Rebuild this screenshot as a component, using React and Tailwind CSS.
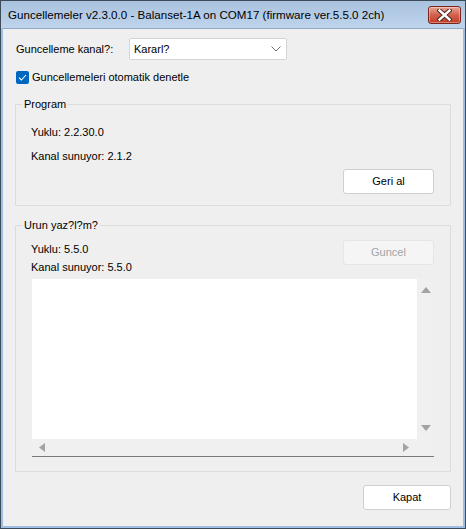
import React from 'react';

const font = { fontFamily: '"Liberation Sans", Arial, sans-serif' };

const CloseButton = () => (
  <div className="mt-[5px] mr-[4px] flex h-[18px] w-[33px] items-center justify-center rounded-[3px] border border-[#7a2318] bg-gradient-to-b from-[#e6a495] via-[#d2604c] to-[#c23b25] shadow-[inset_0_0_0_1px_rgba(255,255,255,0.35)]">
    <svg width="15" height="12" viewBox="0 0 15 12">
      <path d="M2.5 1.5 L12.5 10.5 M12.5 1.5 L2.5 10.5" stroke="#4a2a24" strokeWidth="4.4" strokeLinecap="square" />
      <path d="M2.5 1.5 L12.5 10.5 M12.5 1.5 L2.5 10.5" stroke="#ffffff" strokeWidth="2.4" strokeLinecap="square" />
    </svg>
  </div>
);

const Button = ({ children, disabled }) => (
  <div
    className={
      disabled
        ? 'flex h-[25px] w-[91px] items-center justify-center rounded-[3px] border border-[#e6e6e6] bg-[#f5f5f5] text-[#a3a3a3]'
        : 'flex h-[25px] w-[91px] items-center justify-center rounded-[3px] border border-[#cfcfcf] bg-white text-black'
    }
  >
    {children}
  </div>
);

const Group = ({ title, children, className }) => (
  <div className={'relative mx-[12px] rounded-[1px] border border-[#dcdcdc] ' + className}>
    <span className="absolute -top-[8px] left-[6px] bg-[#efefef] px-[2px] text-black">{title}</span>
    {children}
  </div>
);

const Tri = ({ dir }) => {
  const pts = {
    up: '0,7 5,1 10,7',
    down: '0,1 5,7 10,1',
    left: '7,0 1,4.5 7,9',
    right: '1,0 7,4.5 1,9',
  }[dir];
  const vert = dir === 'up' || dir === 'down';
  return (
    <svg width={vert ? 10 : 8} height={vert ? 8 : 9} viewBox={vert ? '0 0 10 8' : '0 0 8 9'}>
      <polygon points={pts} fill="#a3a3a3" />
    </svg>
  );
};

export default function App() {
  return (
    <div className="h-[529px] w-[466px] bg-white" style={font}>
      <div className="flex h-full w-full flex-col border border-[#3d4a58] bg-[#9fbfe2]">
        {/* Title bar */}
        <div className="flex h-[27px] shrink-0 items-start justify-between bg-gradient-to-b from-[#a9c2df] to-[#bfd4ec]">
          <span className="pl-[7px] pt-[6px] text-[11.6px] leading-[15px] text-black">
            Guncellemeler v2.3.0.0 - Balanset-1A on COM17 (firmware ver.5.5.0 2ch)
          </span>
          <CloseButton />
        </div>

        {/* Client area */}
        <div className="mx-[2px] mb-[2px] flex flex-1 flex-col border-t border-[#8ea7c4] bg-[#efefef] text-[11px] leading-[15px] text-black">
          <div className="flex items-center pl-[13px] pt-[9px]">
            <span className="w-[113px]">Guncelleme kanal?:</span>
            <div className="flex h-[22px] w-[158px] items-center justify-between rounded-[2px] border border-[#d4d4d4] bg-white pl-[4px] pr-[5px]">
              <span>Kararl?</span>
              <svg width="10" height="6" viewBox="0 0 10 6">
                <path d="M0.5 0.5 L5 5 L9.5 0.5" fill="none" stroke="#6d6d6d" strokeWidth="1" />
              </svg>
            </div>
          </div>

          <div className="mt-[10px] flex items-center gap-[3px] pl-[13px]">
            <div className="flex h-[13px] w-[13px] items-center justify-center rounded-[2px] bg-[#0067c0]">
              <svg width="9" height="7" viewBox="0 0 9 7">
                <path d="M1 3.6 L3.4 6 L8 1" fill="none" stroke="#ffffff" strokeWidth="1.1" />
              </svg>
            </div>
            <span>Guncellemeleri otomatik denetle</span>
          </div>

          <Group title="Program" className="mt-[19px] h-[102px]">
            <div className="flex flex-col pl-[15px] pt-[20px]">
              <span>Yuklu: 2.2.30.0</span>
              <span className="mt-[9px]">Kanal sunuyor: 2.1.2</span>
              <div className="mt-[5px] flex justify-end pr-[16px]">
                <Button>Geri al</Button>
              </div>
            </div>
          </Group>

          <Group title="Urun yaz?l?m?" className="mt-[19px] h-[247px]">
            <div className="flex justify-between pl-[15px] pr-[16px] pt-[14px]">
              <div className="flex flex-col pt-[2px]">
                <span>Yuklu: 5.5.0</span>
                <span className="mt-[3px]">Kanal sunuyor: 5.5.0</span>
              </div>
              <Button disabled>Guncel</Button>
            </div>
            <div className="ml-[16px] mr-[16px] mt-[4px] flex h-[178px] flex-col border-b border-[#7a7a7a] bg-[#f0f0f0]">
              <div className="flex flex-1">
                <div className="flex-1 bg-white" />
                <div className="flex w-[17px] flex-col items-center justify-between py-[7px]">
                  <Tri dir="up" />
                  <Tri dir="down" />
                </div>
              </div>
              <div className="flex h-[17px] items-center justify-between pl-[6px] pr-[24px]">
                <Tri dir="left" />
                <Tri dir="right" />
              </div>
            </div>
          </Group>

          <div className="mt-[13px] flex justify-end pr-[12px]">
            <div className="flex h-[25px] w-[88px] items-center justify-center rounded-[3px] border border-[#cfcfcf] bg-white">
              Kapat
            </div>
          </div>
        </div>
      </div>
    </div>
  );
}
